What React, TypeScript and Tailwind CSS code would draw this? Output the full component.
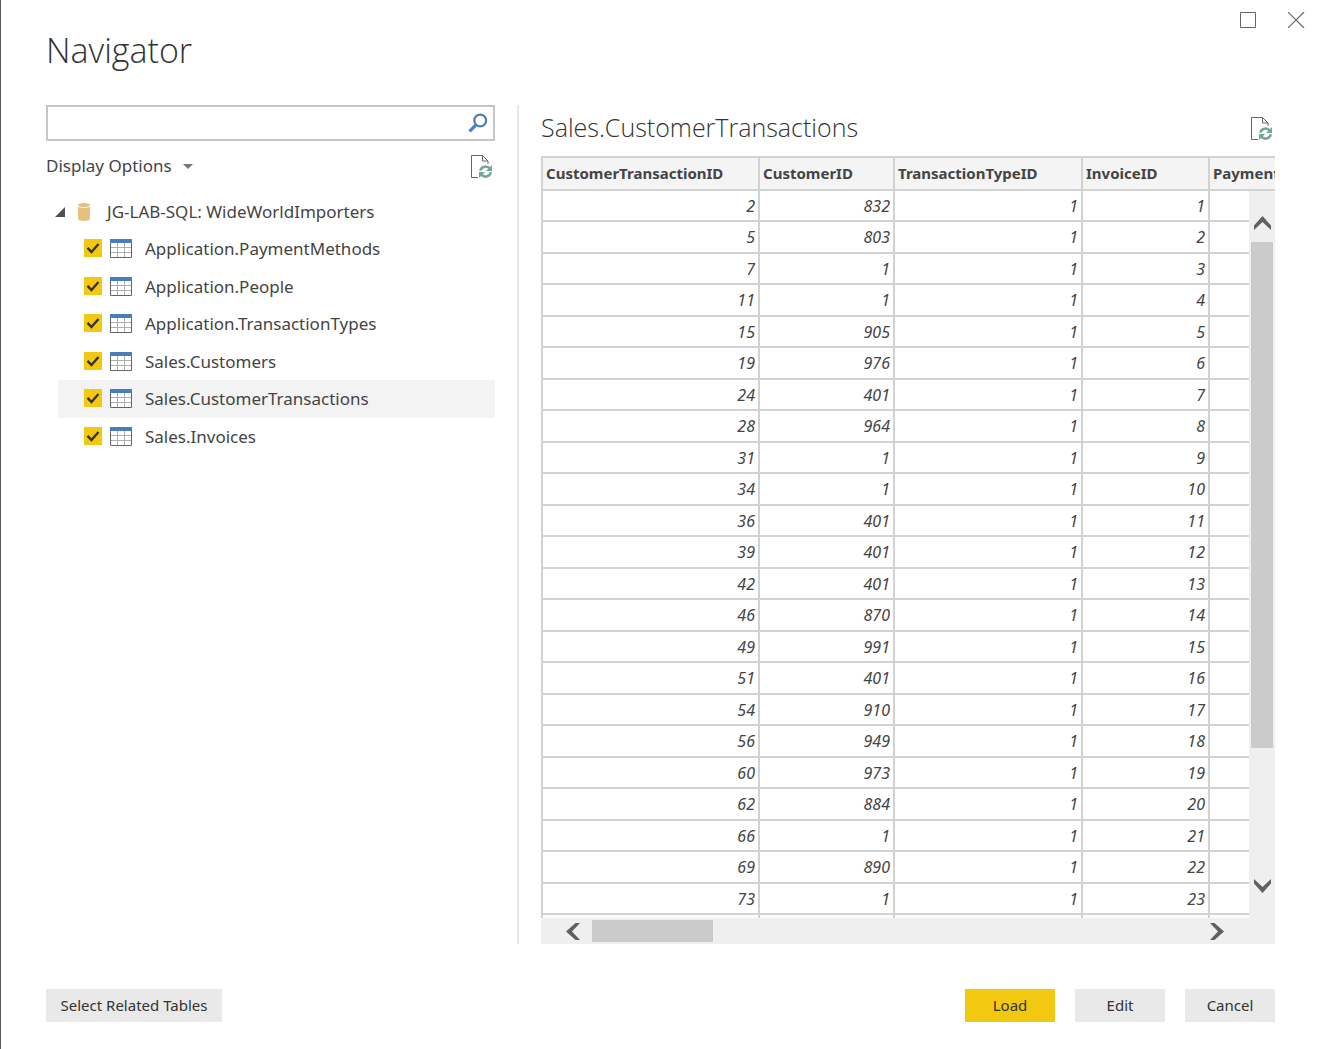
import { useState } from "react";

const sources = [
  "Application.PaymentMethods",
  "Application.People",
  "Application.TransactionTypes",
  "Sales.Customers",
  "Sales.CustomerTransactions",
  "Sales.Invoices"
];

const columns = ["CustomerTransactionID", "CustomerID", "TransactionTypeID", "InvoiceID", "PaymentMethodID"];

// CustomerTransactionID, CustomerID
const transactions: [number, number][] = [
  [2, 832],
  [5, 803],
  [7, 1],
  [11, 1],
  [15, 905],
  [19, 976],
  [24, 401],
  [28, 964],
  [31, 1],
  [34, 1],
  [36, 401],
  [39, 401],
  [42, 401],
  [46, 870],
  [49, 991],
  [51, 401],
  [54, 910],
  [56, 949],
  [60, 973],
  [62, 884],
  [66, 1],
  [69, 890],
  [73, 1]
];

const RefreshIcon = () => (
  <svg width="22" height="24" viewBox="0 0 22 24" fill="none" aria-hidden="true">
    <path d="M7 22.500H.5V.5h11L17 6v3" stroke="#666" />
    <path d="M11.500.5V6H17" stroke="#666" />
    <path d="M9.300 15.600a5.400 5.400 0 0 1 9.600-1.800M19.800 17.200a5.400 5.400 0 0 1-9.600 2.200" stroke="#74a892" strokeWidth="2.600" />
    <path d="M21 10v6h-6zM8 23v-6h6z" fill="#74a892" />
  </svg>
);

const TableIcon = () => (
  <svg width="22" height="19" viewBox="0 0 22 19" fill="none" aria-hidden="true">
    <path d="M.5 3.500h21v15H.5z" fill="#fff" stroke="#666" />
    <path d="M7.500 4v14M14.500 4v14M1 8.500h20M1 13.500h20" stroke="#b0acb0" />
    <path d="M0 0h22v4H0z" fill="#4a7ebb" />
  </svg>
);

const DatabaseIcon = () => (
  <svg width="12" height="18" viewBox="0 0 12 18" aria-hidden="true">
    <path d="M0 3.500C2 5.400 10 5.400 12 3.500V16c-1 2.600-11 2.600-12 0z" fill="#e8c07d" />
    <ellipse cx="6" cy="2" rx="6" ry="2" fill="#e8c07d" />
  </svg>
);

const arrows = {
  up: "M0 9.5 8.5 0 17 9.5V14L8.5 6 0 14z",
  down: "M0 4.5 8.5 14 17 4.5V0L8.5 8 0 0z",
  left: "M9.5 0 0 8.5 9.5 17H14L6 8.5 14 0z",
  right: "M4.5 0 14 8.5 4.5 17H0L8 8.5 0 0z"
};

const ScrollArrow = ({ direction }: { direction: keyof typeof arrows }) => {
  const vertical = direction === "up" || direction === "down";
  return (
    <button type="button" aria-label={`Scroll ${direction}`} className="shrink-0">
      <svg width={vertical ? 17 : 14} height={vertical ? 14 : 17} className="block">
        <path d={arrows[direction]} fill="#606060" />
      </svg>
    </button>
  );
};

const SourceTree = () => {
  const [checked, setChecked] = useState<string[]>(sources);
  const selected = "Sales.CustomerTransactions";

  const toggle = (name: string) =>
    setChecked((prev) => (prev.includes(name) ? prev.filter((n) => n !== name) : [...prev, name]));

  return (
    <div className="mt-3">
      <button type="button" className="flex h-[37px] items-center pl-[9px]">
        <svg width="10" height="10" className="mr-[13px] shrink-0" aria-hidden="true">
          <path d="M10 0v10H0z" fill="#505050" />
        </svg>
        <DatabaseIcon />
        <span className="ml-[17px]">JG-LAB-SQL: WideWorldImporters</span>
      </button>
      <ul className="ml-3">
        {sources.map((name) => (
          <li key={name} className={`h-[37px] odd:h-[38px] ${name === selected ? "bg-[#f3f3f3]" : ""}`}>
            <label className="flex h-9 items-center pl-[26px]">
              <span className="mr-2 grid size-[18px] shrink-0">
                <input
                  type="checkbox"
                  checked={checked.includes(name)}
                  onChange={() => toggle(name)}
                  className="peer col-start-1 row-start-1 size-[18px] appearance-none border border-[#c6c6c6] checked:border-[#f2c811] checked:bg-[#f2c811]"
                />
                <svg
                  viewBox="0 0 18 18"
                  className="pointer-events-none invisible col-start-1 row-start-1 peer-checked:visible"
                  aria-hidden="true"
                >
                  <path d="M3.500 8.800 7.500 13l7-8" fill="none" stroke="#333" strokeWidth="2.400" />
                </svg>
              </span>
              <TableIcon />
              <span className="ml-[13px] pt-0.5">{name}</span>
            </label>
          </li>
        ))}
      </ul>
    </div>
  );
};

const PreviewTable = () => (
  <div className="relative min-h-0 flex-1 overflow-hidden">
    <table className="w-[920px] table-fixed border-separate border-spacing-0 border-t-2 border-l-2 border-[#d2d2d2] text-base leading-5">
      <colgroup>
        <col className="w-[217px]" />
        <col className="w-[135px]" />
        <col className="w-[188px]" />
        <col className="w-[127px]" />
        <col />
      </colgroup>
      <thead>
        <tr className="h-[33px]">
          {columns.map((column) => (
            <th
              key={column}
              scope="col"
              className="border-r-2 border-b-2 border-[#d2d2d2] bg-[#f4f4f4] px-[3px] pb-0.5 text-left text-[15px] font-bold"
            >
              {column}
            </th>
          ))}
        </tr>
      </thead>
      <tbody className="italic">
        {transactions.map(([id, customer], index) => (
          <tr key={id} className="h-[31px] even:h-8">
            {[id, customer, 1, index + 1, ""].map((value, cell) => (
              <td key={cell} className="border-r-2 border-b-2 border-[#d2d2d2] px-[3px] text-right">
                {value}
              </td>
            ))}
          </tr>
        ))}
        <tr className="h-8">
          {columns.map((column) => (
            <td key={column} className="border-r-2 border-b-2 border-[#d2d2d2]" />
          ))}
        </tr>
      </tbody>
    </table>
    <div className="absolute top-[35px] right-0 bottom-0 flex w-[26px] flex-col items-center bg-[#efefef] py-[25px]">
      <ScrollArrow direction="up" />
      <div className="my-3 w-[22px] flex-1">
        <div className="h-[81%] bg-[#cbcbcb]" />
      </div>
      <ScrollArrow direction="down" />
    </div>
  </div>
);

export default function App() {
  const [query, setQuery] = useState("");

  return (
    <main className="flex h-screen flex-col border-l border-[#5a5a5a] bg-white pr-11 pb-[27px] pl-[45px] font-['Noto_Sans','Open_Sans',sans-serif] text-[17px] text-[#444]">
      <header className="flex h-[105px] shrink-0 items-start justify-between">
        <h1 className="mt-[26px] font-['Open_Sans','Noto_Sans',sans-serif] text-[34px] leading-[48px] font-light text-[#333]">
          Navigator
        </h1>
        <div className="-mr-[30px] flex gap-8 pt-3">
          <button type="button" aria-label="Maximize">
            <svg width="16" height="16" className="block">
              <path d="M.5.5h15v15H.5z" fill="none" stroke="#666" />
            </svg>
          </button>
          <button type="button" aria-label="Close">
            <svg width="17" height="16" className="block">
              <path d="m0 0 16 16m0-16-16 16" fill="none" stroke="#666" strokeWidth="1.200" />
            </svg>
          </button>
        </div>
      </header>

      <div className="flex min-h-0 flex-1">
        <section className="w-[449px] shrink-0">
          <form className="flex h-9 items-center border-2 border-[#c6c6c6] pr-[5px]" onSubmit={(e) => e.preventDefault()}>
            <input
              type="text"
              aria-label="Search"
              value={query}
              onChange={(e) => setQuery(e.target.value)}
              className="h-full min-w-0 flex-1 px-2 outline-none"
            />
            <button type="submit" aria-label="Search">
              <svg width="20" height="20" viewBox="0 0 20 20" fill="none" className="block">
                <circle cx="12.200" cy="7.500" r="5.900" stroke="#4a7ebb" strokeWidth="2.200" />
                <path d="m8 11.800-6.500 6.500" stroke="#4a7ebb" strokeWidth="3.200" />
              </svg>
            </button>
          </form>
          <div className="mt-3 flex h-7 items-center justify-between pr-0.5">
            <button type="button" className="flex items-center gap-[11px] pb-0.5">
              Display Options
              <svg width="10" height="5" aria-hidden="true">
                <path d="M0 0h10L5 5z" fill="#777" />
              </svg>
            </button>
            <button type="button" aria-label="Refresh">
              <RefreshIcon />
            </button>
          </div>
          <SourceTree />
        </section>

        <section className="ml-[22px] flex min-w-0 flex-1 flex-col border-l-2 border-[#e6e6e6] pl-[22px]">
          <div className="flex h-[51px] shrink-0 items-center justify-between pr-0.5">
            <h2 className="pb-2 font-['Open_Sans','Noto_Sans',sans-serif] text-[25px] leading-8 font-light text-[#333]">
              Sales.CustomerTransactions
            </h2>
            <button type="button" aria-label="Refresh preview" className="pb-1">
              <RefreshIcon />
            </button>
          </div>
          <PreviewTable />
          <div className="flex h-[26px] shrink-0 items-center bg-[#efefef] pr-[51px] pl-[25px]">
            <ScrollArrow direction="left" />
            <div className="mx-3 h-[22px] flex-1">
              <div className="h-full w-1/5 bg-[#cbcbcb]" />
            </div>
            <ScrollArrow direction="right" />
          </div>
        </section>
      </div>

      <footer className="mt-[45px] flex shrink-0 gap-5 text-[15px] text-[#333]">
        <button type="button" className="mr-auto h-[33px] w-44 bg-[#e9e9e9]">
          Select Related Tables
        </button>
        <button type="button" className="h-[33px] w-[90px] bg-[#f2c811]">
          Load
        </button>
        <button type="button" className="h-[33px] w-[90px] bg-[#e9e9e9]">
          Edit
        </button>
        <button type="button" className="h-[33px] w-[90px] bg-[#e9e9e9]">
          Cancel
        </button>
      </footer>
    </main>
  );
}
